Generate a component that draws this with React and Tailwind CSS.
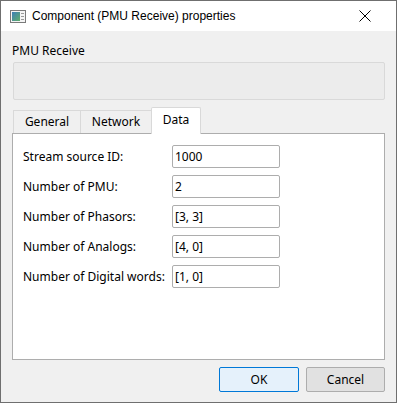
import React from 'react';

const rows = [
    ['Stream source ID:', '1000'],
    ['Number of PMU:', '2'],
    ['Number of Phasors:', '[3, 3]'],
    ['Number of Analogs:', '[4, 0]'],
    ['Number of Digital words:', '[1, 0]'],
];

function AppIcon() {
    return (
        <svg width="16" height="13" viewBox="0 0 16 13">
            <defs>
                <linearGradient id="ic" x1="0" y1="0" x2="1" y2="1">
                    <stop offset="0" stopColor="#3d7fb8" />
                    <stop offset="1" stopColor="#5fae6a" />
                </linearGradient>
            </defs>
            <rect x="0.5" y="0.5" width="15" height="12" fill="#f4f4f4" stroke="#7a7a7a" />
            <rect x="2" y="2" width="8" height="9" fill="url(#ic)" />
            <rect x="11" y="3" width="3" height="1" fill="#9a9a9a" />
            <rect x="11" y="6" width="3" height="1" fill="#9a9a9a" />
            <rect x="11" y="9" width="3" height="1" fill="#9a9a9a" />
        </svg>
    );
}

export default function App() {
    return (
        <div
            className="flex h-[403px] w-[397px] flex-col border border-[#6f6f6f] bg-[#f0f0f0] text-[12px] leading-[16px] text-black"
            style={{ fontFamily: '"Noto Sans", Arial, sans-serif' }}
        >
            <div className="flex h-[30px] items-center bg-white pl-[9px] pr-[25px]">
                <AppIcon />
                <span className="ml-[6px] flex-1 font-['Liberation_Sans',Arial,sans-serif]">Component (PMU Receive) properties</span>
                <svg width="12" height="12" viewBox="0 0 12 12" stroke="#000" strokeWidth="1">
                    <path d="M0.5 0.5 L11.5 11.5 M11.5 0.5 L0.5 11.5" />
                </svg>
            </div>

            <div className="flex flex-1 flex-col px-[11px] pt-[12px]">
                <div>PMU Receive</div>
                <div className="ml-px mt-[3px] h-[38px] rounded-[2px] border border-[#d9d9d9] bg-[#ececec]" />

                <div className="mt-[7px] flex h-[26px] items-end pl-px">
                    <div className="flex h-[23px] w-[68px] items-center justify-center border border-b-0 border-[#d9d9d9] bg-[#f0f0f0]">General</div>
                    <div className="-ml-px flex h-[23px] w-[72px] items-center justify-center border border-b-0 border-[#d9d9d9] bg-[#f0f0f0]">Network</div>
                    <div className="relative z-10 -mb-px -ml-px flex h-[27px] w-[50px] items-center justify-center rounded-t-[2px] border border-b-0 border-[#d9d9d9] bg-white pb-[2px]">Data</div>
                </div>

                <div className="flex h-[227px] flex-col gap-[7px] border border-[#adadad] bg-white pl-[10px] pt-[11px]">
                    {rows.map(([label, value]) => (
                        <div key={label} className="flex items-center">
                            <span className="w-[149px]">{label}</span>
                            <div className="flex h-[23px] w-[108px] items-center rounded-[2px] border border-[#adadad] bg-white px-[2px]">
                                {value}
                            </div>
                        </div>
                    ))}
                </div>

                <div className="mt-[7px] flex justify-end gap-[7px]">
                    <button className="h-[25px] w-[80px] rounded-[2px] border border-[#0078d7] bg-[#e5f1fb]">OK</button>
                    <button className="h-[25px] w-[79px] rounded-[2px] border border-[#adadad] bg-[#e1e1e1]">Cancel</button>
                </div>
            </div>
        </div>
    );
}
